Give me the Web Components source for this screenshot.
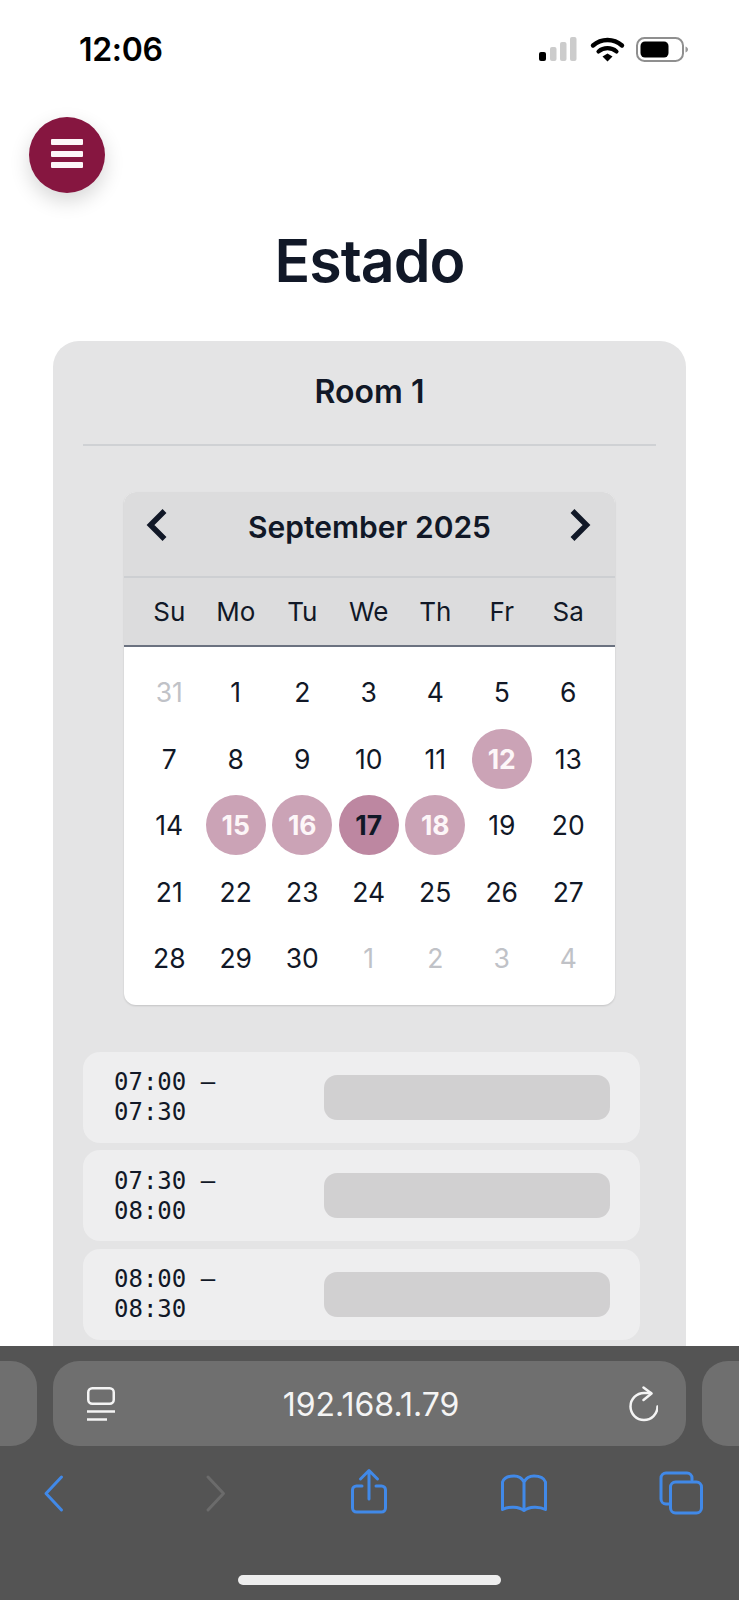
<!DOCTYPE html>
<html lang="es">
<head>
<meta charset="utf-8">
<title>Estado</title>
<style>
    html, body { margin: 0; height: 1600px; overflow: hidden; background: #fff; }
    body { position: relative; font-family: Inter, "Liberation Sans", sans-serif; color: #111827; }
</style>
</head>
<body>
<status-bar time="12:06"></status-bar>
<menu-button></menu-button>
<page-title>Estado</page-title>
<room-card name="Room 1">
    <cal-month marked="12,15,16,18" current="17"></cal-month>
    <time-slot>07:00 – 07:30</time-slot>
    <time-slot>07:30 – 08:00</time-slot>
    <time-slot>08:00 – 08:30</time-slot>
    <time-slot>08:30 – 09:00</time-slot>
</room-card>
<browser-bar url="192.168.1.79"></browser-bar>

<script>
class StatusBar extends HTMLElement {
    constructor() {
        super();
        const shadow = this.attachShadow({ mode: 'open' });
        shadow.innerHTML = `
            <style>
                :host { display: flex; justify-content: space-between; align-items: center; height: 98px; padding: 2px 50px 0 79px; box-sizing: border-box; color: #000; }
                .time { font: 600 32px/1 Inter, "Liberation Sans", sans-serif; letter-spacing: -0.3px; }
                svg { display: block; }
            </style>
            <span class="time">${this.getAttribute('time')}</span>
            <svg width="150" height="26" viewBox="0 0 150 26">
                <rect x="0" y="15" width="7" height="9" rx="2" fill="#000"/>
                <rect x="11" y="10" width="6.5" height="14" rx="2" fill="#ccc"/>
                <rect x="21" y="5" width="6.5" height="19" rx="2" fill="#ccc"/>
                <rect x="31" y="0" width="6.5" height="24" rx="2" fill="#ccc"/>
                <path d="M54 8.500a22 22 0 0 1 29 0" fill="none" stroke="#000" stroke-width="4.400" stroke-linecap="round"/>
                <path d="M59.500 14.500a14 14 0 0 1 18 0" fill="none" stroke="#000" stroke-width="4.200" stroke-linecap="round"/>
                <path d="M63.500 19.500 68.500 16.500 73.500 19.500 68.500 24.500Z" fill="#000"/>
                <rect x="98" y="1" width="46" height="23" rx="7.500" fill="none" stroke="#8f8f8f" stroke-width="2"/>
                <rect x="101.500" y="4.500" width="28" height="16" rx="4.500" fill="#000"/>
                <path d="M146.500 9.500c1.500.5 2.500 1.600 2.500 3s-1 2.500-2.500 3Z" fill="#9a9a9a"/>
            </svg>
        `;
    }
}

class MenuButton extends HTMLElement {
    constructor() {
        super();
        const shadow = this.attachShadow({ mode: 'open' });
        shadow.innerHTML = `
            <style>
                :host { display: flex; flex-direction: column; justify-content: center; align-items: center; gap: 5.500px; width: 76px; height: 76px; margin: 19px 0 0 29px; padding-bottom: 3px; box-sizing: border-box; border-radius: 50%; background: #861640; box-shadow: 0 8px 20px rgba(0, 0, 0, 0.16); }
                i { display: block; width: 32px; height: 6px; border-radius: 1px; background: #fdf6f8; }
            </style>
            <i></i><i></i><i></i>
        `;
    }
}

class PageTitle extends HTMLElement {
    constructor() {
        super();
        const shadow = this.attachShadow({ mode: 'open' });
        shadow.innerHTML = `
            <style>
                :host { display: block; margin-top: 32px; text-align: center; letter-spacing: -1px; font: 600 59px/72px Inter, "Liberation Sans", sans-serif; color: #111827; }
            </style>
            <slot></slot>
        `;
    }
}

class RoomCard extends HTMLElement {
    constructor() {
        super();
        const shadow = this.attachShadow({ mode: 'open' });
        shadow.innerHTML = `
            <style>
                :host { display: block; box-sizing: border-box; width: 633px; margin: 44px 0 0 53px; padding: 0 30px; border-radius: 26px 26px 0 0; background: #e4e4e5; }
                h2 { margin: 0; height: 105px; box-sizing: border-box; padding-top: 32px; border-bottom: 2px solid #cfd1d4; text-align: center; font: 600 32px/38px Inter, "Liberation Sans", sans-serif; color: #111827; }
            </style>
            <h2>${this.getAttribute('name')}</h2>
            <slot></slot>
        `;
    }
}

class CalMonth extends HTMLElement {
    constructor() {
        super();
        const shadow = this.attachShadow({ mode: 'open' });
        const marked = this.getAttribute('marked').split(',');
        const current = this.getAttribute('current');
        let cells = '<span class="day off">31</span>';
        for (let d = 1; d <= 30; d++) {
            let cls = 'day';
            if (marked.includes(String(d))) cls += ' marked';
            if (String(d) === current) cls += ' current';
            cells += `<span class="${cls}"><b>${d}</b></span>`;
        }
        for (let d = 1; d <= 4; d++) cells += `<span class="day off">${d}</span>`;
        const names = ['Su', 'Mo', 'Tu', 'We', 'Th', 'Fr', 'Sa'].map(n => `<span>${n}</span>`).join('');
        shadow.innerHTML = `
            <style>
                :host { display: block; width: 491px; margin: 46px 0 47px 41px; border-radius: 12px; overflow: hidden; background: #fff; box-shadow: 0 1px 2px rgba(0, 0, 0, 0.14); color: #111827; font-family: Inter, "Liberation Sans", sans-serif; }
                .head { display: flex; justify-content: space-between; align-items: flex-start; height: 86px; padding: 0 22px; box-sizing: border-box; background: #dcdcdd; border-bottom: 2px solid #cdcfd2; }
                .head svg { margin-top: 16px; }
                .head strong { margin-top: 15px; font: 600 30px/40px Inter, "Liberation Sans", sans-serif; }
                .names, .grid { display: grid; grid-template-columns: repeat(7, 66.500px); padding: 0 12px; }
                .names { height: 67px; align-items: center; background: #dcdcdd; border-bottom: 2px solid #6b7280; font-size: 26px; text-align: center; }
                .grid { grid-auto-rows: 66.500px; padding-top: 12px; padding-bottom: 13px; font-size: 26.500px; }
                .day { display: flex; justify-content: center; align-items: center; }
                .day b { font-weight: 400; }
                .off { color: #c0c2c7; }
                .marked b, .current b { display: flex; justify-content: center; align-items: center; width: 60px; height: 60px; border-radius: 50%; font-weight: 700; }
                .marked b { background: #cba3b6; color: #fdf6f8; }
                .current b { background: #bd87a1; color: #111827; }
            </style>
            <div class="head">
                <svg width="22" height="34" viewBox="0 0 22 34"><path d="M18.500 3 4.500 17l14 14" fill="none" stroke="#111827" stroke-width="5.500"/></svg>
                <strong>September 2025</strong>
                <svg width="22" height="34" viewBox="0 0 22 34" style="margin-left:-2px;margin-right:2px"><path d="M3.500 3l14 14-14 14" fill="none" stroke="#111827" stroke-width="5.500"/></svg>
            </div>
            <div class="names">${names}</div>
            <div class="grid">${cells}</div>
        `;
    }
}

class TimeSlot extends HTMLElement {
    constructor() {
        super();
        const shadow = this.attachShadow({ mode: 'open' });
        shadow.innerHTML = `
            <style>
                :host { display: grid; grid-template-columns: 170px 286px; column-gap: 40px; align-items: center; width: 557px; height: 91px; margin-bottom: 7.500px; padding-left: 31px; box-sizing: border-box; border-radius: 17px; background: #eeeeef; color: #111827; font: 400 24px/30px "DejaVu Sans Mono", "Liberation Mono", monospace; }
                .bar { height: 45px; border-radius: 13px; background: #d1d0d1; }
            </style>
            <div><slot></slot></div>
            <div class="bar"></div>
        `;
    }
}

class BrowserBar extends HTMLElement {
    constructor() {
        super();
        const shadow = this.attachShadow({ mode: 'open' });
        shadow.innerHTML = `
            <style>
                :host { position: absolute; left: 0; right: 0; top: 1346px; bottom: 0; display: block; background: #545454; overflow: hidden; }
                .tabs { display: grid; grid-template-columns: 633px 633px 633px; column-gap: 16px; justify-content: center; height: 85px; margin-top: 15px; }
                .field { border-radius: 26px; background: #6f6f6f; }
                .url { display: flex; justify-content: space-between; align-items: center; padding: 0 28px 0 34px; color: #f4f4f4; font: 400 32px/1 Inter, "Liberation Sans", sans-serif; }
                .url span { margin: 3px 1px 0 0; }
                .tools { display: flex; justify-content: space-between; align-items: flex-start; padding: 28px 36px 0 42px; }
                svg { display: block; fill: none; stroke-linecap: round; stroke-linejoin: round; }
                .tools svg { stroke: #4189e8; stroke-width: 3; }
                .home { width: 263px; height: 10px; border-radius: 5px; background: #eeeeee; position: absolute; left: 238px; top: 229px; }
            </style>
            <div class="tabs">
                <div class="field"></div>
                <div class="field url">
                    <svg width="28" height="34" viewBox="0 0 28 34" stroke="#f4f4f4" stroke-width="2.500">
                        <rect x="1.250" y="1.250" width="25.500" height="15.500" rx="4"/>
                        <path d="M0 24.500h28M0 32.500h20" stroke-linecap="butt"/>
                    </svg>
                    <span>${this.getAttribute('url')}</span>
                    <svg width="30" height="36" viewBox="0 0 30 36" stroke="#f4f4f4" stroke-width="2.500">
                        <path d="M29.500 20.500a13.500 13.500 0 1 1-13.500-13.500h7"/>
                        <path d="M15.500 1.500 23.500 7.500 15.500 14"/>
                    </svg>
                </div>
                <div class="field"></div>
            </div>
            <div class="tools">
                <svg width="40" height="40" viewBox="0 0 40 40"><path d="M19.500 3 4 19.500 19.500 36"/></svg>
                <svg width="40" height="40" viewBox="0 0 40 40" style="stroke:#6b6b6b;margin-left:3px"><path d="M11 3 26.500 19.500 11 36"/></svg>
                <svg width="40" height="48" viewBox="0 0 40 48" style="margin-top:-6px"><path d="M13 18H7.500a4 4 0 0 0-4 4v18a4 4 0 0 0 4 4h25a4 4 0 0 0 4-4V22a4 4 0 0 0-4-4H27"/><path d="M20 31V3M11.500 11 20 2.500l8.500 8.500"/></svg>
                <svg width="46" height="40" viewBox="0 0 46 40"><path d="M23 36.500C18 32.500 8 32 1.500 35.500V8C3 4 8 2 13 2c4.500 0 8 2 10 6 2-4 5.500-6 10-6 5 0 10 2 11.500 6v27.500C38 32 28 32.500 23 36.500ZM23 8v28.500"/></svg>
                <svg width="44" height="44" viewBox="0 0 44 44" style="margin-top:-3px"><path d="M33 9V7a5 5 0 0 0-5-5H7a5 5 0 0 0-5 5v21a5 5 0 0 0 5 5h4"/><rect x="11.500" y="11" width="31" height="31" rx="5"/></svg>
            </div>
            <div class="home"></div>
        `;
    }
}

customElements.define('status-bar', StatusBar);
customElements.define('menu-button', MenuButton);
customElements.define('page-title', PageTitle);
customElements.define('room-card', RoomCard);
customElements.define('cal-month', CalMonth);
customElements.define('time-slot', TimeSlot);
customElements.define('browser-bar', BrowserBar);
</script>
</body>
</html>
